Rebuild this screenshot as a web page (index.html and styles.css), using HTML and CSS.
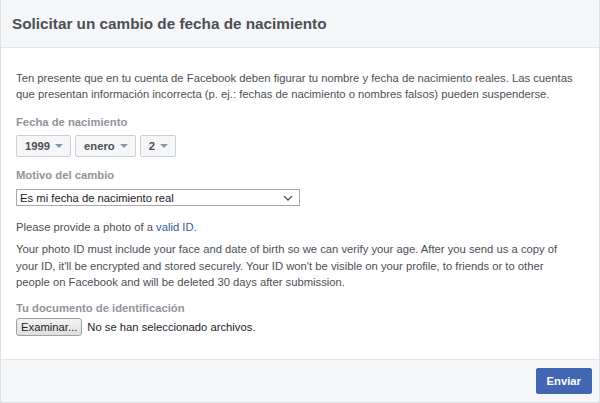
FILE: index.html
```html
<!DOCTYPE html>
<html lang="es">
<head>
  <meta charset="UTF-8" />
  <title>Solicitar un cambio de fecha de nacimiento</title>
  <link rel="stylesheet" href="styles.css">
</head>
<body>

<div class="dialog">
  <div class="dialog-header">
    <h2>Solicitar un cambio de fecha de nacimiento</h2>
  </div>

  <div class="dialog-body">
    <p class="intro">Ten presente que en tu cuenta de Facebook deben figurar tu nombre y fecha de nacimiento reales. Las cuentas que presentan información incorrecta (p. ej.: fechas de nacimiento o nombres falsos) pueden suspenderse.</p>

    <div class="label">Fecha de nacimiento</div>
    <div class="date-row">
      <div class="pick">1999 <span class="caret"></span></div>
      <div class="pick">enero <span class="caret"></span></div>
      <div class="pick">2 <span class="caret"></span></div>
    </div>

    <div class="label">Motivo del cambio</div>
    <div class="select">
      <span>Es mi fecha de nacimiento real</span>
      <svg width="10" height="6" viewBox="0 0 10 6"><path d="M1 1 L5 5 L9 1" fill="none" stroke="#555" stroke-width="1.3"/></svg>
    </div>

    <p class="note">Please provide a photo of a <a href="#">valid ID</a>.</p>

    <p class="note long">Your photo ID must include your face and date of birth so we can verify your age. After you send us a copy of your ID, it'll be encrypted and stored securely. Your ID won't be visible on your profile, to friends or to other people on Facebook and will be deleted 30 days after submission.</p>

    <div class="label">Tu documento de identificación</div>
    <div class="file-row">
      <button class="browse">Examinar...</button>
      <span>No se han seleccionado archivos.</span>
    </div>
  </div>

  <div class="dialog-footer">
    <button class="send">Enviar</button>
  </div>
</div>

</body>
</html>
```

FILE: styles.css
```css
body {
  margin: 0;
  font-family: "Liberation Sans", Arial, sans-serif;
  font-size: 11.25px;
  color: #4b4f56;
  background: #fff;
}

.dialog {
  width: 600px;
  height: 403px;
  box-sizing: border-box;
  border: 1px solid #dddfe2;
  border-top: none;
  display: flex;
  flex-direction: column;
}

.dialog-header {
  background: #f5f6f7;
  border-bottom: 1px solid #e5e5e5;
  height: 47px;
  padding: 0 11px;
  display: flex;
  align-items: center;
}

.dialog-header h2 {
  margin: 0;
  font-size: 15.3px;
  color: #4b4f56;
  font-weight: bold;
}

.dialog-body {
  flex-grow: 1;
  padding: 22px 18px 0 15px;
}

p {
  margin: 0;
  line-height: 16px;
}

.intro {
  margin-bottom: 12px;
}

.label {
  color: #90949c;
  font-weight: bold;
  line-height: 16px;
  margin-bottom: 5px;
}

.date-row {
  display: flex;
  gap: 4px;
  margin-bottom: 10px;
}

.pick {
  height: 22px;
  box-sizing: border-box;
  border: 1px solid #ccd0d5;
  border-radius: 2px;
  background: #f5f6f7;
  font-weight: bold;
  padding: 0 7px 0 8px;
  display: flex;
  align-items: center;
  gap: 5px;
}

.caret {
  width: 0;
  height: 0;
  border-left: 4px solid transparent;
  border-right: 4px solid transparent;
  border-top: 4px solid #90949c;
}

.select {
  width: 284px;
  height: 17px;
  box-sizing: border-box;
  border: 1px solid #a9a9a9;
  background: #fff;
  color: #1d2129;
  padding: 0 6px 0 3px;
  display: flex;
  align-items: center;
  justify-content: space-between;
  margin-top: 6px;
  margin-bottom: 13px;
}

a {
  color: #365899;
  text-decoration: none;
}

.long {
  max-width: 550px;
  line-height: 16.6px;
  margin-top: 6px;
  margin-bottom: 9px;
}

.file-row {
  display: flex;
  align-items: center;
  gap: 5px;
  margin-top: -3px;
  color: #1d2129;
}

.browse {
  font-family: inherit;
  font-size: 11.25px;
  color: #1d2129;
  height: 18px;
  padding: 0 4px;
  border: 1px solid #a0a0a0;
  border-radius: 3px;
  background: linear-gradient(#f4f4f4, #dedede);
}

.dialog-footer {
  background: #f5f6f7;
  border-top: 1px solid #e5e5e5;
  height: 42px;
  padding: 0 7px;
  display: flex;
  align-items: center;
  justify-content: flex-end;
}

.send {
  font-family: inherit;
  background: #4267b2;
  border: 1px solid #4267b2;
  border-radius: 2px;
  color: #fff;
  font-size: 11.25px;
  font-weight: bold;
  height: 26px;
  padding: 0 10px;
}
```
